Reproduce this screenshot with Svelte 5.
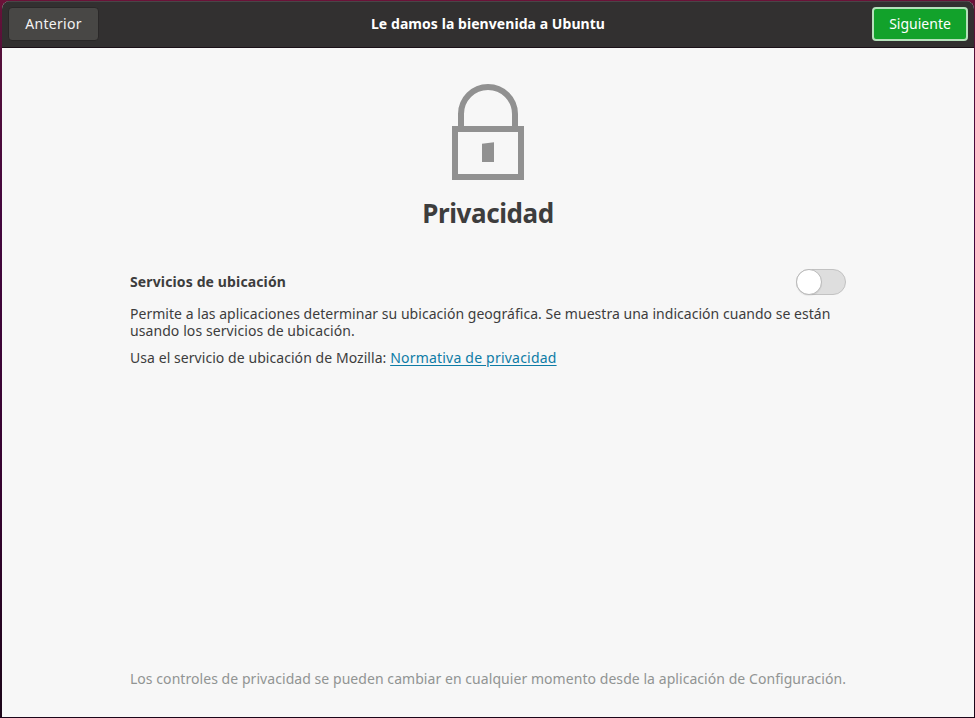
<script>
  let location = $state(false);
</script>

<div class="desktop">
  <div class="window">
    <header>
      <button class="back"><span>Anterior</span></button>
      <h1>Le damos la bienvenida a Ubuntu</h1>
      <button class="next"><span>Siguiente</span></button>
    </header>
    <main>
      <svg class="lock" width="72" height="96" viewBox="0 0 72 96" aria-hidden="true">
        <path d="M9 45V30A27 27 0 0 1 63 30V45" fill="none" stroke="#919191" stroke-width="6" />
        <rect x="3" y="45" width="66" height="48" fill="none" stroke="#919191" stroke-width="6" />
        <path d="M30 59.8L42 58.3V78H30Z" fill="#919191" />
      </svg>
      <h2>Privacidad</h2>
      <section>
        <div class="row">
          <h3>Servicios de ubicación</h3>
          <button
            class="switch"
            class:on={location}
            role="switch"
            aria-checked={location}
            aria-label="Servicios de ubicación"
            onclick={() => (location = !location)}
          ><i></i></button>
        </div>
        <p class="description">
          <span class="first">Permite a las aplicaciones determinar su ubicación geográfica. Se muestra una indicación cuando se están</span>
          <span class="second">usando los servicios de ubicación.</span>
        </p>
        <p class="provider">
          <span>Usa el servicio de ubicación de Mozilla:</span>
          <a href="#privacy">Normativa de privacidad</a>
        </p>
      </section>
      <footer><span>Los controles de privacidad se pueden cambiar en cualquier momento desde la aplicación de Configuración.</span></footer>
    </main>
  </div>
</div>

<style>
  :global(body) { background: #300a24; }
  * { box-sizing: border-box; }
  h1, h2, h3, p { margin: 0; white-space: nowrap; }
  .desktop {
    width: 975px;
    height: 718px;
    padding: 1px 1px 1px 2px;
    background: linear-gradient(#6b1238, #55103a 50px, #43063d 220px, #35032f 500px, #1c0619);
    font-family: "Noto Sans", "Open Sans", sans-serif;
    font-size: 14px;
    color: #3d3d3d;
  }
  .window {
    height: 716px;
    display: flex;
    flex-direction: column;
    border-radius: 8px 8px 0 0;
    overflow: hidden;
    background: #f7f7f7;
  }
  header {
    height: 47px;
    flex: none;
    display: grid;
    grid-template-columns: 96px 1fr 96px;
    align-items: center;
    padding: 0 6px 2px;
    background: #323030;
    border-top: 1px solid #494547;
    border-bottom: 1px solid #1b1118;
  }
  h1 { font-size: 14px; line-height: 20px; color: #fff; text-align: center; letter-spacing: 0.06px; }
  header button {
    font: inherit;
    line-height: 20px;
    padding: 0;
    color: #fff;
    white-space: nowrap;
  }
  .back {
    width: 91px;
    height: 34px;
    background: #484745;
    border: 1px solid #2a2828;
    border-radius: 4px;
  }
  header .back { color: #f3f3f3; letter-spacing: 0.3px; }
  .next {
    width: 96px;
    height: 34px;
    background: #12a22b;
    border: 2px solid #b5e1bb;
    border-radius: 4px;
  }
  main {
    flex: 1;
    display: flex;
    flex-direction: column;
    align-items: center;
    padding-top: 36px;
  }
  .lock { display: block; }
  h2 { margin-top: 15px; font-size: 26px; line-height: 36px; letter-spacing: -0.4px; }
  section { width: 716px; margin-top: 38px; }
  .row { display: flex; align-items: center; justify-content: space-between; height: 26px; }
  h3 { font-size: 14px; line-height: 20px; letter-spacing: 0.13px; }
  .switch {
    width: 50px;
    height: 26px;
    padding: 0;
    border: 1px solid #c2c2c2;
    border-radius: 13px;
    background: #dedede;
    display: flex;
  }
  .switch i {
    width: 26px;
    height: 26px;
    margin: -1px;
    border: 1px solid #b9b9b9;
    border-radius: 13px;
    background: #fff;
    box-shadow: 0 1px 1px #0001;
  }
  .switch.on { justify-content: flex-end; background: #12a22b; }
  .description { margin-top: 10px; line-height: 17px; }
  .description span { display: block; }
  .first { letter-spacing: 0.033px; }
  .second { letter-spacing: 0.08px; }
  .provider { margin-top: 10px; line-height: 17px; letter-spacing: 0.06px; }
  a { color: #0e7ca6; text-underline-offset: 2px; letter-spacing: 0.21px; }
  footer { margin-top: auto; margin-bottom: 28px; color: #919493; line-height: 20px; white-space: nowrap; letter-spacing: 0.057px; }
</style>
